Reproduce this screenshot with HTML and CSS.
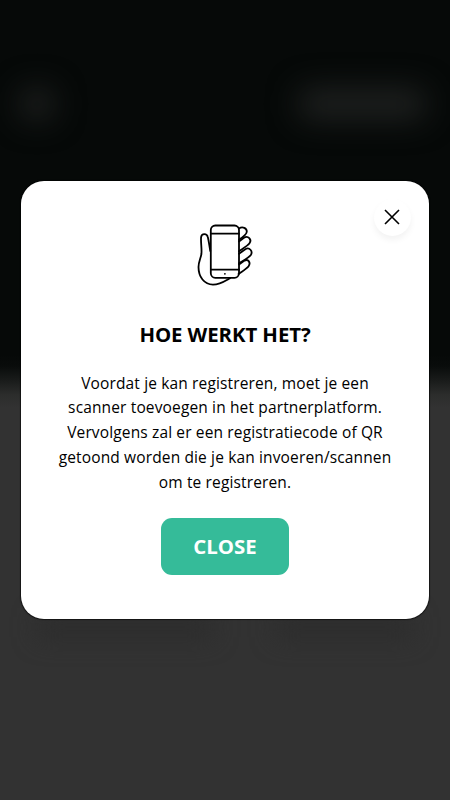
FILE: index.html
```
<!DOCTYPE html>
<html lang="nl">

<head>
    <meta charset="UTF-8">
    <meta name="viewport" content="width=device-width, initial-scale=1.0">
    <title>Hoe werkt het?</title>
    <link rel="stylesheet" href="styles.css">
</head>

<body>
    <!-- blurred page behind the popup -->
    <div class="page">
        <div class="header">
            <div class="logo"></div>
            <div class="language"></div>
        </div>
        <div class="tiles">
            <div class="tile"></div>
            <div class="tile small"></div>
        </div>
    </div>

    <div class="overlay">
        <div class="modal">
            <button class="close-icon" id="closeIcon" aria-label="Close">
                <svg width="16" height="16" viewBox="0 0 16 16">
                    <path d="M1 1 15 15M15 1 1 15" />
                </svg>
            </button>

            <svg class="phone" width="56" height="62" viewBox="0 0 56 62">
                <path d="M13.3 27C12.4 22 11.8 17 10.8 13C10 9.300 4.600 9.200 4.100 13.200C3.600 18 5 25 4.400 30C3.800 34 1.500 38 1.500 43C1.500 53 7.300 60.600 16 60.600C23 60.600 28 57 33 54.200" />
                <rect x="13.800" y="1.500" width="28.200" height="52.300" rx="4.500" />
                <path d="M13.800 9.700H42M13.800 45.700H42" />
                <path d="M42 4.500C45.500 2.200 50 4 49.800 7.800C49.600 10.700 45 13.800 42 15.800" />
                <path d="M42 17.500L47 13.800C51 11 55.200 15.600 52.500 19.200C50.700 21.600 45.500 24.800 42 27.300" />
                <path d="M42 29.800L48.300 25.300C52.300 22.700 56.200 27.200 53.800 31C52 33.600 46 36.700 42 39.200" />
                <path d="M42 40.500L47.500 36.600C51.400 34.500 54 38.900 51.600 42.200C49.700 44.700 45.500 47.200 41.500 50" />
                <circle cx="27.900" cy="49.800" r="0.900" />
            </svg>

            <h1>HOE WERKT HET?</h1>
            <p>
                Voordat je kan registreren, moet je een<br>
                scanner toevoegen in het partnerplatform.<br>
                Vervolgens zal er een registratiecode of QR<br>
                getoond worden die je kan invoeren/scannen<br>
                om te registreren.
            </p>
            <button class="close-button" id="closeButton">CLOSE</button>
        </div>
    </div>
</body>

</html>
```

FILE: styles.css
```
* {
    box-sizing: border-box;
}

body {
    margin: 0;
    height: 100vh;
    overflow: hidden;
    font-family: "Open Sans", "Noto Sans", sans-serif;
    color: #000;
    background-color: #323232;
}

.page {
    height: 800px;
    background: linear-gradient(#060908 0, #060908 355px, #090c0b 366px, #1a1c1b 381px, #2c2d2c 395px, #323232 408px);
}

.header {
    display: flex;
    justify-content: space-between;
    height: 616px;
    padding: 88px 24px 0 20px;
}

.logo,
.language {
    height: 32px;
    filter: blur(15px);
    border-radius: 12px;
    background-color: #1e201f;
}

.logo {
    width: 34px;
}

.language {
    width: 128px;
}

.tiles {
    display: flex;
    justify-content: space-between;
    padding: 0 38px;
}

.tile {
    width: 174px;
    height: 22px;
    filter: blur(12px);
    background-color: #2c2c2c;
}

.tile.small {
    width: 136px;
}

.overlay {
    position: absolute;
    inset: 0;
    display: flex;
    justify-content: center;
    align-items: center;
}

.modal {
    position: relative;
    display: flex;
    flex-direction: column;
    align-items: center;
    width: 407.4px;
    height: 438.6px;
    padding-top: 43px;
    border-radius: 23px;
    background-color: #fff;
    box-shadow: 0 0 1px 1px rgba(0, 0, 0, 0.6);
    text-align: center;
}

.close-icon {
    position: absolute;
    top: 18px;
    right: 18px;
    display: flex;
    justify-content: center;
    align-items: center;
    width: 37px;
    height: 37px;
    padding: 0;
    border: none;
    border-radius: 50%;
    background-color: #fff;
    box-shadow: 0 4px 6px rgba(0, 0, 0, 0.05);
    cursor: pointer;
}

.close-icon path,
.phone {
    fill: none;
    stroke: #000;
    stroke-width: 1.6;
}

.phone {
    stroke-width: 1.8;
    stroke-linecap: round;
    stroke-linejoin: round;
}

.phone circle {
    fill: #000;
    stroke: none;
}

h1 {
    margin: 34px 0 0;
    font-size: 20.4px;
    line-height: 28px;
    font-weight: 700;
    letter-spacing: -0.08px;
}

p {
    margin: 23px 0 0;
    font-size: 15.5px;
    line-height: 24.7px;
    letter-spacing: 0.14px;
    white-space: nowrap;
}

.close-button {
    width: 128px;
    height: 57px;
    margin-top: 24px;
    padding-bottom: 3px;
    border: none;
    border-radius: 11px;
    font-family: inherit;
    font-size: 20.4px;
    font-weight: 700;
    color: #fff;
    background-color: #35bb99;
    cursor: pointer;
}
```
